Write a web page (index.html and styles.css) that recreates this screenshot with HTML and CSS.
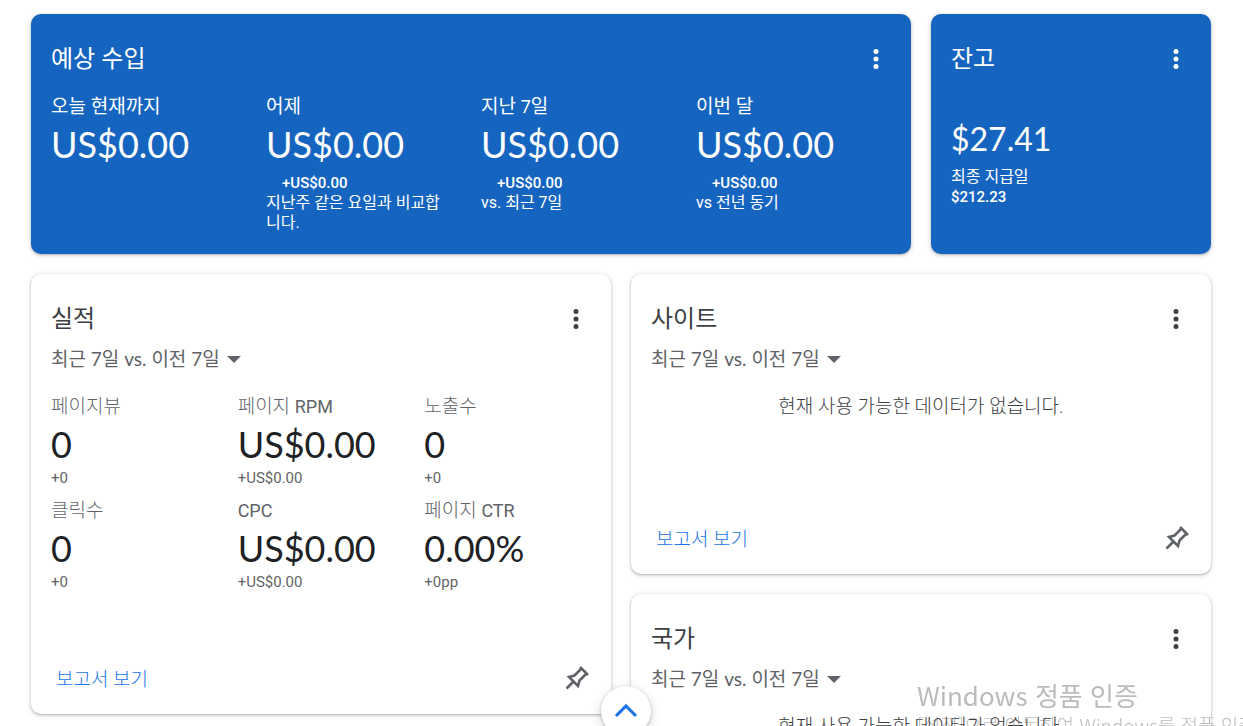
FILE: index.html
```html
<!DOCTYPE html>
<html lang="ko">
<head>
    <meta charset="UTF-8">
    <meta name="viewport" content="width=device-width, initial-scale=1">
    <title>홈</title>
    <link rel="stylesheet" href="styles.css">
</head>
<body>
    <main class="dashboard">
        <section class="card card-blue earnings">
            <div class="card-header">
                <h2>예상 수입</h2>
                <button type="button" class="icon-button" aria-label="더보기">
                    <svg viewBox="0 0 24 24"><path d="M12 8a2 2 0 1 0 0-4 2 2 0 0 0 0 4zm0 2a2 2 0 1 0 0 4 2 2 0 0 0 0-4zm0 6a2 2 0 1 0 0 4 2 2 0 0 0 0-4z"/></svg>
                </button>
            </div>
            <div class="metrics metrics-four">
                <div class="metric">
                    <div class="label">오늘 현재까지</div>
                    <div class="value">US$0.00</div>
                </div>
                <div class="metric">
                    <div class="label">어제</div>
                    <div class="value">US$0.00</div>
                    <div class="change">+US$0.00</div>
                    <div class="note">지난주 같은 요일과 비교합니다.</div>
                </div>
                <div class="metric">
                    <div class="label">지난 <span class="latin">7</span>일</div>
                    <div class="value">US$0.00</div>
                    <div class="change">+US$0.00</div>
                    <div class="note">vs. 최근 7일</div>
                </div>
                <div class="metric">
                    <div class="label">이번 달</div>
                    <div class="value">US$0.00</div>
                    <div class="change">+US$0.00</div>
                    <div class="note">vs 전년 동기</div>
                </div>
            </div>
        </section>

        <section class="card card-blue balance">
            <div class="card-header">
                <h2>잔고</h2>
                <button type="button" class="icon-button" aria-label="더보기">
                    <svg viewBox="0 0 24 24"><path d="M12 8a2 2 0 1 0 0-4 2 2 0 0 0 0 4zm0 2a2 2 0 1 0 0 4 2 2 0 0 0 0-4zm0 6a2 2 0 1 0 0 4 2 2 0 0 0 0-4z"/></svg>
                </button>
            </div>
            <div class="balance-body">
                <div class="value">$27.41</div>
                <div class="note">최종 지급일</div>
                <div class="last-payment">$212.23</div>
            </div>
        </section>

        <div class="column">
            <section class="card performance">
                <div class="card-header">
                    <h2>실적</h2>
                    <button type="button" class="icon-button" aria-label="더보기">
                        <svg viewBox="0 0 24 24"><path d="M12 8a2 2 0 1 0 0-4 2 2 0 0 0 0 4zm0 2a2 2 0 1 0 0 4 2 2 0 0 0 0-4zm0 6a2 2 0 1 0 0 4 2 2 0 0 0 0-4z"/></svg>
                    </button>
                </div>
                <div class="range">
                    <select aria-label="실적 기간">
                        <option>최근 7일 vs. 이전 7일</option>
                    </select>
                </div>
                <div class="metrics metrics-three">
                    <div class="metric">
                        <div class="label">페이지뷰</div>
                        <div class="value">0</div>
                        <div class="delta">+0</div>
                    </div>
                    <div class="metric">
                        <div class="label">페이지 <span class="latin">RPM</span></div>
                        <div class="value">US$0.00</div>
                        <div class="delta">+US$0.00</div>
                    </div>
                    <div class="metric">
                        <div class="label">노출수</div>
                        <div class="value">0</div>
                        <div class="delta">+0</div>
                    </div>
                    <div class="metric">
                        <div class="label">클릭수</div>
                        <div class="value">0</div>
                        <div class="delta">+0</div>
                    </div>
                    <div class="metric">
                        <div class="label"><span class="latin">CPC</span></div>
                        <div class="value">US$0.00</div>
                        <div class="delta">+US$0.00</div>
                    </div>
                    <div class="metric">
                        <div class="label">페이지 <span class="latin">CTR</span></div>
                        <div class="value">0.00%</div>
                        <div class="delta">+0pp</div>
                    </div>
                </div>
                <div class="card-footer">
                    <a href="#">보고서 보기</a>
                    <button type="button" class="icon-button pin" aria-label="고정">
                        <svg viewBox="0 0 30 30"><path d="M19 4l8 8M20.500 5.500l-7 7-5.500 1.500 9 9 1.500-5.500 7-7M12.500 18.500l-7 7"/></svg>
                    </button>
                </div>
            </section>
        </div>

        <div class="column">
            <section class="card list-card">
                <div class="card-header">
                    <h2>사이트</h2>
                    <button type="button" class="icon-button" aria-label="더보기">
                        <svg viewBox="0 0 24 24"><path d="M12 8a2 2 0 1 0 0-4 2 2 0 0 0 0 4zm0 2a2 2 0 1 0 0 4 2 2 0 0 0 0-4zm0 6a2 2 0 1 0 0 4 2 2 0 0 0 0-4z"/></svg>
                    </button>
                </div>
                <div class="range">
                    <select aria-label="사이트 기간">
                        <option>최근 7일 vs. 이전 7일</option>
                    </select>
                </div>
                <p class="empty">현재 사용 가능한 데이터가 없습니다.</p>
                <div class="card-footer">
                    <a href="#">보고서 보기</a>
                    <button type="button" class="icon-button pin" aria-label="고정">
                        <svg viewBox="0 0 30 30"><path d="M19 4l8 8M20.500 5.500l-7 7-5.500 1.500 9 9 1.500-5.500 7-7M12.500 18.500l-7 7"/></svg>
                    </button>
                </div>
            </section>

            <section class="card list-card">
                <div class="card-header">
                    <h2>국가</h2>
                    <button type="button" class="icon-button" aria-label="더보기">
                        <svg viewBox="0 0 24 24"><path d="M12 8a2 2 0 1 0 0-4 2 2 0 0 0 0 4zm0 2a2 2 0 1 0 0 4 2 2 0 0 0 0-4zm0 6a2 2 0 1 0 0 4 2 2 0 0 0 0-4z"/></svg>
                    </button>
                </div>
                <div class="range">
                    <select aria-label="국가 기간">
                        <option>최근 7일 vs. 이전 7일</option>
                    </select>
                </div>
                <p class="empty">현재 사용 가능한 데이터가 없습니다.</p>
            </section>
        </div>
    </main>

    <button type="button" class="scroll-top" aria-label="위로">
        <svg viewBox="0 0 24 24"><path d="M4 16l8-8 8 8"/></svg>
    </button>

    <div class="activation">
        <div class="activation-title">Windows 정품 인증</div>
        <div class="activation-text">[설정]으로 이동하여 Windows를 정품 인증합니다.</div>
    </div>
</body>
</html>
```

FILE: styles.css
```css
* {
    box-sizing: border-box;
}
body {
    margin: 0;
    height: 100vh;
    overflow: hidden;
    background: #fff;
    color: #3c4043;
    font-family: Roboto, "Noto Sans CJK KR", sans-serif;
    font-size: 19px;
    font-weight: 300;
}
.dashboard {
    display: grid;
    grid-template-columns: repeat(4, 1fr);
    gap: 20px;
    align-items: start;
    padding: 14px 32px 20px 31px;
}
.column {
    grid-column: span 2;
    display: flex;
    flex-direction: column;
    gap: 20px;
}
.card {
    display: flex;
    flex-direction: column;
    padding: 20px;
    background: #fff;
    border-radius: 10px;
    box-shadow: 0 1px 2px rgba(60, 64, 67, 0.3), 0 1px 4px 1px rgba(60, 64, 67, 0.15);
}
.card-blue {
    min-height: 240px;
    background: #1565c0;
    color: #fff;
}
.earnings {
    grid-column: span 3;
}
.performance {
    min-height: 440px;
}
.list-card {
    min-height: 300px;
}
.card-header {
    display: flex;
    justify-content: space-between;
    align-items: center;
    height: 48px;
}
h2 {
    margin: 0;
    font-family: Lato, "Noto Sans CJK KR", sans-serif;
    font-size: 24px;
    font-weight: 400;
    line-height: 48px;
}
.icon-button {
    width: 30px;
    height: 30px;
    margin-top: 2px;
    padding: 0;
    border: none;
    background: none;
    color: inherit;
    cursor: pointer;
}
.icon-button svg {
    display: block;
    width: 30px;
    height: 30px;
    fill: currentColor;
}
.pin {
    margin-top: 0;
    color: #5f6368;
}
.pin svg {
    fill: none;
    stroke: currentColor;
    stroke-width: 2.6;
}
.metrics {
    display: grid;
    gap: 9px 20px;
    margin-top: 9px;
}
.metrics-four {
    grid-template-columns: repeat(4, 1fr);
}
.metrics-three {
    grid-template-columns: repeat(3, 1fr);
    margin-top: 17px;
}
.label {
    line-height: 32px;
}
.card-blue .label,
.latin {
    font-weight: 400;
}
.latin {
    font-size: 18px;
}
.value {
    font-family: Lato, sans-serif;
    font-size: 36px;
    font-weight: 400;
    line-height: 42px;
}
.change {
    margin-top: 8px;
    padding-left: 16px;
    font-size: 15px;
    font-weight: 500;
    line-height: 20px;
}
.note {
    padding-right: 10px;
    font-size: 16px;
    font-weight: 400;
    line-height: 20px;
}
.balance-body {
    margin-top: 36px;
}
.balance-body .value {
    font-size: 32px;
}
.balance-body .note {
    margin-top: 7px;
}
.last-payment {
    font-size: 15px;
    font-weight: 500;
    line-height: 20px;
}
.performance .label,
.delta {
    color: #5f6368;
}
.performance .value {
    color: #202124;
}
.delta {
    margin-top: 5px;
    font-size: 15px;
    font-weight: 400;
    line-height: 16px;
}
.range {
    display: flex;
    align-items: center;
    gap: 7px;
    height: 34px;
    color: #5f6368;
}
.range::after {
    content: "";
    border: 7px solid transparent;
    border-top-color: #5f6368;
    border-bottom: none;
}
select {
    appearance: none;
    padding: 0;
    border: none;
    background: none;
    color: inherit;
    font-family: Lato, "Noto Sans CJK KR", sans-serif;
    font-size: 19px;
    font-weight: 400;
    line-height: 32px;
}
.range + .metrics,
.empty {
    margin: 15px 0 0;
}
.empty {
    text-align: center;
    line-height: 32px;
}
.card-footer {
    display: flex;
    justify-content: space-between;
    align-items: center;
    height: 32px;
    margin-top: auto;
}
.card-footer a {
    padding: 0 0 2px 5px;
    color: #1a73e8;
    text-decoration: none;
}
.scroll-top {
    position: fixed;
    bottom: -10px;
    left: 50%;
    width: 50px;
    height: 50px;
    margin-left: -21px;
    padding: 10px;
    border: none;
    border-radius: 50%;
    background: #fff;
    box-shadow: 0 1px 3px rgba(60, 64, 67, 0.3), 0 3px 8px 2px rgba(60, 64, 67, 0.15);
    cursor: pointer;
}
.scroll-top svg {
    display: block;
    width: 30px;
    height: 30px;
    fill: none;
    stroke: #1a73e8;
    stroke-width: 2.5;
}
/* system watermark in the corner */
.activation {
    position: fixed;
    top: 678px;
    left: 917px;
    color: rgba(120, 120, 120, 0.5);
    font-family: "Noto Sans CJK KR", sans-serif;
    font-weight: 400;
    white-space: nowrap;
    pointer-events: none;
}
.activation-title {
    font-size: 26px;
    line-height: 34px;
}
.activation-text {
    font-size: 19px;
    font-weight: 300;
    line-height: 26px;
}
```
